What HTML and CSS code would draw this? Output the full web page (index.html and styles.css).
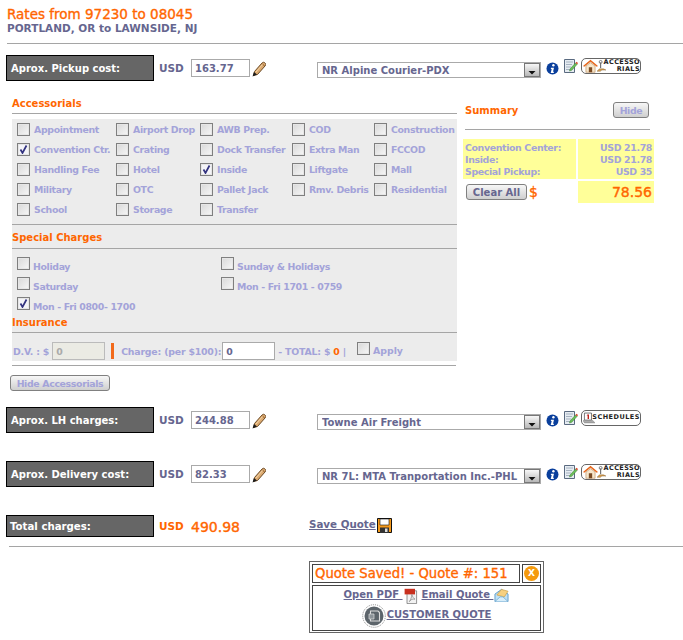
FILE: index.html
```html
<!DOCTYPE html>
<html lang="en">
<head>
<meta charset="utf-8">
<title>Rates</title>
<link rel="stylesheet" href="styles.css">
</head>
<body>
<svg class="defs" width="0" height="0" aria-hidden="true">
  <symbol id="pencil" viewBox="0 0 14 16">
    <path d="M1.500 14.500l1-4 7.500-8.500c1-1 2-1 3 0s1 2 0 3l-7.500 8.500z" fill="#dcaa70" stroke="#6b4a25" stroke-width="1"/>
    <path d="M10 2.500l2.500 2.500" stroke="#8a5a28" fill="none"/>
    <path d="M4 11l6.500-7.500" stroke="#f3d4a8" fill="none"/>
    <path d="M0.500 15.500l1.500-4.500 3 2.500z" fill="#1c1c1c"/>
  </symbol>
  <symbol id="info" viewBox="0 0 13 13">
    <circle cx="6.500" cy="6.500" r="6" fill="#0a3f9c"/>
    <circle cx="7.400" cy="3.300" r="1.200" fill="#fff"/>
    <path d="M5 5.800h3l-1 4h1l-.3 1.200h-3l1-4H4.800z" fill="#fff"/>
  </symbol>
  <symbol id="note" viewBox="0 0 16 16">
    <path d="M1.500 1.500h10v13h-10z" fill="#e6ecf2" stroke="#5a6a80"/>
    <path d="M3 4h7M3 6.500h6M3 9h5M3 11.500h4" stroke="#a6b2c0"/>
    <path d="M7 11l5.500-6 1.700 1.300-5.500 6-2.200.7z" fill="#6cc05a" stroke="#3a7a30" stroke-width=".5"/>
    <path d="M12.500 5l1-1.200 1.500 1.200-.8 1.300z" fill="#d8442a"/>
  </symbol>
  <symbol id="floppy" viewBox="0 0 15 15">
    <path d="M.5.500h14v14H.5z" fill="#f59a1c" stroke="#111"/>
    <path d="M3 1h9v6H3z" fill="#fff" stroke="#111" stroke-width=".6"/>
    <path d="M3 9.500h9V15H3z" fill="#333"/>
    <path d="M8 10.500h2.500V14H8z" fill="#ddd"/>
  </symbol>
  <symbol id="pdf" viewBox="0 0 16 20">
    <path d="M3 3.500h12v16H3z" fill="#f2f2f2" stroke="#777"/>
    <path d="M0 1h13v7H0z" fill="#c8301f"/>
    <path d="M6 17c2-3 3-6 3-9 1 3 2 5 4 6-3-.5-5 0-7 3z" fill="none" stroke="#888" stroke-width=".9"/>
  </symbol>
  <symbol id="mail" viewBox="0 0 16 15">
    <path d="M1 6.500l7-5 7 5v8H1z" fill="#bfe0f5" stroke="#5c9cc8"/>
    <path d="M3 7.500l5-6 7 2-4 6z" fill="#f7d080" stroke="#c99a3a" stroke-width=".7"/>
    <path d="M1 14.500l5.500-5h3l5.500 5" fill="#d8eefa" stroke="#5c9cc8" stroke-width=".7"/>
  </symbol>
  <symbol id="cust" viewBox="0 0 24 24">
    <circle cx="12" cy="12" r="11.300" fill="#fff" stroke="#888" stroke-dasharray="1 1"/>
    <circle cx="12" cy="12" r="9.500" fill="#5c646a"/>
    <path d="M8.500 7h7.500l1.500 1.500V17H8.500z" fill="none" stroke="#ddd" stroke-width="1.100"/>
    <path d="M7 10h5v5H7z" fill="#8b9297" stroke="#ddd" stroke-width=".7"/>
  </symbol>
  <symbol id="house" viewBox="0 0 18 15">
    <path d="M0 7.500L9 0l9 7.500-1.500 1L9 2.500 1.500 8.500z" fill="#e8661a"/>
    <path d="M3.500 7.500L9 3.500l5.500 4V15h-11z" fill="#f6e6cc" stroke="#a9733a" stroke-width=".6"/>
    <path d="M7 9h4v6H7z" fill="#7a4a22"/>
  </symbol>
  <symbol id="hand" viewBox="0 0 16 15">
    <path d="M4.500 3v7" stroke="#555" stroke-width="1.200"/>
    <circle cx="4.500" cy="2.500" r="1.800" fill="none" stroke="#666"/>
    <path d="M0 14l3-3h5l3 1.500H6l-2 1.500z" fill="#d9a254" stroke="#7a5520" stroke-width=".5"/>
  </symbol>
  <symbol id="sched" viewBox="0 0 17 15">
    <path d="M2 .500h10v10H2z" fill="#fff" stroke="#444"/>
    <path d="M6.500 2.500h2V9h-2zM5 3.500l1.500-1V4z" fill="#c0201a"/>
    <path d="M0 11h14l3 3.500H2z" fill="#aaa" stroke="#666" stroke-width=".5"/>
  </symbol>
</svg>

<main class="page">
  <header class="head">
    <h1 class="title">Rates from 97230 to 08045</h1>
    <p class="route">PORTLAND, OR to LAWNSIDE, NJ</p>
  </header>
  <hr class="rule rule-top">

  <section class="cost-row cost-first">
    <div class="cost-label">Aprox. Pickup cost:</div>
    <span class="cur">USD</span>
    <input class="amount" type="text" value="163.77">
    <svg class="ic-pencil"><use href="#pencil"/></svg>
    <select class="carrier"><option>NR Alpine Courier-PDX</option></select>
    <svg class="ic-info"><use href="#info"/></svg>
    <svg class="ic-note"><use href="#note"/></svg>
    <a class="pill"><svg class="pill-house"><use href="#house"/></svg><svg class="pill-hand"><use href="#hand"/></svg><span class="pill-text">ACCESSO<br>RIALS</span></a>
  </section>

  <div class="middle">
    <section class="acc">
      <h2 class="sec acc-head">Accessorials</h2>
      <hr class="rule">
      <div class="panel">
        <div class="acc-grid">
          <label class="opt"><input type="checkbox">Appointment</label>
          <label class="opt"><input type="checkbox">Airport Drop</label>
          <label class="opt"><input type="checkbox">AWB Prep.</label>
          <label class="opt"><input type="checkbox">COD</label>
          <label class="opt"><input type="checkbox">Construction</label>
          <label class="opt"><input type="checkbox" checked>Convention Ctr.</label>
          <label class="opt"><input type="checkbox">Crating</label>
          <label class="opt"><input type="checkbox">Dock Transfer</label>
          <label class="opt"><input type="checkbox">Extra Man</label>
          <label class="opt"><input type="checkbox">FCCOD</label>
          <label class="opt"><input type="checkbox">Handling Fee</label>
          <label class="opt"><input type="checkbox">Hotel</label>
          <label class="opt"><input type="checkbox" checked>Inside</label>
          <label class="opt"><input type="checkbox">Liftgate</label>
          <label class="opt"><input type="checkbox">Mall</label>
          <label class="opt"><input type="checkbox">Military</label>
          <label class="opt"><input type="checkbox">OTC</label>
          <label class="opt"><input type="checkbox">Pallet Jack</label>
          <label class="opt"><input type="checkbox">Rmv. Debris</label>
          <label class="opt"><input type="checkbox">Residential</label>
          <label class="opt"><input type="checkbox">School</label>
          <label class="opt"><input type="checkbox">Storage</label>
          <label class="opt"><input type="checkbox">Transfer</label>
        </div>
        <hr class="rule">
        <h2 class="sec sec-special">Special Charges</h2>
        <hr class="rule">
        <div class="spc-grid">
          <label class="opt opt-raised"><input type="checkbox">Holiday</label>
          <label class="opt opt-raised"><input type="checkbox">Sunday &amp; Holidays</label>
          <label class="opt opt-raised"><input type="checkbox">Saturday</label>
          <label class="opt opt-raised"><input type="checkbox">Mon - Fri 1701 - 0759</label>
          <label class="opt opt-raised"><input type="checkbox" checked>Mon - Fri 0800- 1700</label>
        </div>
        <h2 class="sec sec-ins">Insurance</h2>
        <hr class="rule">
        <div class="ins">
          <span>D.V. : $</span>
          <input class="dv" type="text" value="0" disabled>
          <span class="bar"></span>
          <span>Charge: (per $100):</span>
          <input class="charge" type="text" value="0">
          <span>- TOTAL: $ <b class="orange">0</b> |</span>
          <label class="opt opt-raised opt-apply"><input type="checkbox">Apply</label>
        </div>
      </div>
      <hr class="rule rule-under">
      <button class="btn btn-hide-acc" type="button">Hide Accessorials</button>
    </section>

    <aside class="summary">
      <div class="sum-head">
        <h2 class="sec sum-title">Summary</h2>
        <button class="btn btn-hide" type="button">Hide</button>
      </div>
      <hr class="rule rule-sum">
      <div class="sum-table">
        <div class="yellow sum-names">Convention Center:<br>Inside:<br>Special Pickup:</div>
        <div class="yellow sum-vals">USD 21.78<br>USD 21.78<br>USD 35</div>
      </div>
      <div class="sum-total">
        <div class="sum-clear"><button class="btn btn-clear" type="button">Clear All</button><span class="dollar">$</span></div>
        <div class="yellow sum-amount">78.56</div>
      </div>
    </aside>
  </div>

  <section class="cost-row cost-lh">
    <div class="cost-label">Aprox. LH charges:</div>
    <span class="cur">USD</span>
    <input class="amount" type="text" value="244.88">
    <svg class="ic-pencil"><use href="#pencil"/></svg>
    <select class="carrier"><option>Towne Air Freight</option></select>
    <svg class="ic-info"><use href="#info"/></svg>
    <svg class="ic-note"><use href="#note"/></svg>
    <a class="pill"><svg class="pill-sched"><use href="#sched"/></svg><span class="pill-text pill-one">SCHEDULES</span></a>
  </section>

  <section class="cost-row cost-del">
    <div class="cost-label">Aprox. Delivery cost:</div>
    <span class="cur">USD</span>
    <input class="amount" type="text" value="82.33">
    <svg class="ic-pencil"><use href="#pencil"/></svg>
    <select class="carrier"><option>NR 7L: MTA Tranportation Inc.-PHL</option></select>
    <svg class="ic-info"><use href="#info"/></svg>
    <svg class="ic-note"><use href="#note"/></svg>
    <a class="pill"><svg class="pill-house"><use href="#house"/></svg><svg class="pill-hand"><use href="#hand"/></svg><span class="pill-text">ACCESSO<br>RIALS</span></a>
  </section>

  <section class="total-row">
    <div class="cost-label cost-label-total">Total charges:</div>
    <span class="cur orange">USD</span>
    <span class="grand">490.98</span>
    <a class="link save">Save Quote</a>
    <svg class="ic-floppy"><use href="#floppy"/></svg>
  </section>
  <hr class="rule rule-bottom">

  <section class="saved">
    <div class="saved-top">
      <div class="saved-title">Quote Saved! - Quote #: 151</div>
      <div class="saved-x"><span class="x">X</span></div>
    </div>
    <div class="saved-links">
      <div class="saved-line">
        <a class="link">Open PDF </a><svg class="ic-pdf"><use href="#pdf"/></svg>
        <a class="link">Email Quote </a><svg class="ic-mail"><use href="#mail"/></svg>
      </div>
      <div class="saved-line saved-line2">
        <svg class="ic-cust"><use href="#cust"/></svg><a class="link">CUSTOMER QUOTE</a>
      </div>
    </div>
  </section>
</main>
</body>
</html>
```
FILE: styles.css
```css
* { box-sizing: border-box; }
html, body { margin: 0; padding: 0; background: #fff; }
body { font: bold 10px "DejaVu Sans", Verdana, sans-serif; color: #66668f; }
.defs { position: absolute; }
.page { width: 683px; height: 640px; overflow: hidden; }

.head { padding: 7px 0 0 7px; height: 43px; }
.title { margin: 0; font-size: 13.500px; font-weight: normal; -webkit-text-stroke: .35px #ff6600; line-height: 15px; color: #ff6600; }
.route { margin: 0; font-size: 10.500px; line-height: 12px; color: #66668f; }

.rule { border: 0; height: 1px; margin: 0; background: #a5a5a5; }
.rule-top { margin-left: 7px; }
.rule-under { margin-top: 4px; width: 444px; }
.rule-sum { margin-top: 11px; width: 185px; margin-left: 2px; }
.rule-bottom { margin: 9px 0 0 9px; }

.cost-row { display: flex; align-items: flex-start; height: 26px; margin-left: 6px; }
.cost-first { margin-top: 11px; }
.cost-lh { margin-top: 16px; }
.cost-del { margin-top: 28px; }
.cost-label { width: 148px; height: 26px; flex: none; padding-left: 4px; background: #666; border: 1px solid #000; color: #fff; font-size: 10px; line-height: 26px; }
.cur { margin: 7px 0 0 5px; width: 32px; line-height: 13px; font-size: 10.500px; }
.amount { width: 59px; height: 18px; margin-top: 4px; padding: 0 0 0 3px; border: 1px solid #aaa; background: #fff; font: bold 10px "DejaVu Sans", sans-serif; color: #66668f; }
.ic-pencil { width: 14px; height: 16px; margin: 6px 0 0 2px; flex: none; }
.carrier { width: 224px; height: 16px; margin: 7px 0 0 51px; padding: 0 18px 0 4px; border: 1px solid #aaa; border-radius: 0; appearance: none; font: bold 10px "DejaVu Sans", sans-serif; color: #66668f;
  background: #fff url("data:image/svg+xml,%3Csvg xmlns='http://www.w3.org/2000/svg' width='16' height='14'%3E%3Cdefs%3E%3ClinearGradient id='g' x1='0' y1='0' x2='0' y2='1'%3E%3Cstop offset='0' stop-color='%23fafafa'/%3E%3Cstop offset='1' stop-color='%23b5b5b5'/%3E%3C/linearGradient%3E%3C/defs%3E%3Crect x='.5' y='.5' width='15' height='13' fill='url(%23g)' stroke='%23777'/%3E%3Cpath d='M4.500 8h7L8 11.500z' fill='%23111'/%3E%3C/svg%3E") no-repeat right 0 top 0; }
.ic-info { width: 13px; height: 13px; margin: 7px 0 0 5px; flex: none; }
.ic-note { width: 16px; height: 16px; margin: 3px 0 0 4px; flex: none; }
.pill { position: relative; display: block; width: 60px; height: 16px; margin: 3px 0 0 2px; border: 1px solid #666; border-radius: 5px; background: #fff; color: #222; overflow: hidden; flex: none; }
.pill-house { position: absolute; left: 1px; top: 0; width: 15px; height: 14px; }
.pill-hand { position: absolute; left: 15px; top: 0; width: 13px; height: 14px; }
.pill-sched { position: absolute; left: 1px; top: 0; width: 12px; height: 14px; }
.pill-text { position: absolute; right: 0; top: 0; font: bold 6.500px/7px "DejaVu Sans", sans-serif; text-align: right; letter-spacing: .4px; }
.pill-one { top: 3px; letter-spacing: .5px; }

.middle { display: flex; align-items: flex-start; height: 310px; padding-left: 12px; }
.acc { width: 445px; flex: none; }
.sec { margin: 0; font-size: 10px; line-height: 12px; color: #ff6600; }
.acc-head { margin-top: 17px; height: 15px; }
.panel { margin-top: 5px; height: 242px; background: #ececec; }
.acc-grid { display: grid; grid-template-columns: 99px 84px 92px 82px 83px; grid-auto-rows: 20px; padding-left: 5px; height: 105px; }
.opt { display: flex; align-items: center; gap: 4px; font-size: 9.400px; letter-spacing: -.35px; color: #a3a3d9; white-space: nowrap; }
.opt input { flex: none; width: 13px; height: 13px; margin: 0; appearance: none; border: 1px solid #7f7f7f; background: linear-gradient(135deg, #d8d8d8, #f7f7f7); box-shadow: inset 0 0 0 1px #e6e6e6; }
.opt input:checked { background: #f4f4f8 url("data:image/svg+xml,%3Csvg xmlns='http://www.w3.org/2000/svg' width='11' height='11'%3E%3Cpath d='M2.500 5.500l2 3.500L8.500 1.500' fill='none' stroke='%2333337f' stroke-width='1.700'/%3E%3C/svg%3E") no-repeat center; }
.sec-special { padding-top: 7px; height: 23px; }
.spc-grid { display: grid; grid-template-columns: 204px 1fr; grid-auto-rows: 20px; padding-left: 5px; height: 62px; margin-top: 5px; }
.opt-raised { align-items: flex-start; gap: 3px; line-height: 14px; padding-top: 6px; }
.opt-raised input { margin-top: -3px; }
.sec-ins { height: 16px; padding-top: 1px; }
.ins { display: flex; align-items: center; height: 28px; padding: 8px 0 0 1px; font-size: 9.400px; letter-spacing: -.2px; color: #a3a3d9; white-space: nowrap; }
.orange { color: #ff6600; }
.dv { width: 53px; height: 18px; margin-left: 3px; padding: 0 0 0 3px; border: 1px solid #bbb; background: #ebebe4; font: bold 9.400px "DejaVu Sans", sans-serif; color: #aaa; }
.bar { width: 3px; height: 16px; margin: 0 7px 0 6px; background: #f26a1b; }
.charge { width: 53px; height: 18px; margin: 0 3px 0 1px; padding: 0 0 0 3px; border: 1px solid #aaa; background: #fff; font: bold 9.400px "DejaVu Sans", sans-serif; color: #66668f; }
.opt-apply { padding-top: 0; margin-left: 11px; letter-spacing: 0; }
.opt-apply input { margin-top: -2px; }
.btn { display: block; margin: 0; padding: 0; border: 1px solid #808080; border-radius: 3px; background: linear-gradient(#f7f7f7, #cfcfcf); font: bold 9.400px "DejaVu Sans", sans-serif; letter-spacing: -.35px; color: #a3a3d9; white-space: nowrap; }
.btn-hide-acc { width: 100px; height: 16px; margin: 9px 0 0 -2px; }

.summary { width: 191px; margin-left: 6px; padding-top: 21px; }
.sum-head { display: flex; justify-content: space-between; align-items: center; height: 16px; padding: 0 5px 0 2px; }
.sum-title { padding-top: 2px; }
.btn-hide { width: 36px; height: 16px; }
.sum-table { display: flex; gap: 2px; margin-top: 9px; }
.yellow { background: #ffff99; font-size: 9.400px; letter-spacing: -.35px; color: #a3a3d9; }
.sum-names { width: 113px; height: 40px; padding: 3px 0 0 2px; line-height: 12px; }
.sum-vals { width: 76px; height: 40px; padding: 3px 2px 0 0; line-height: 12px; text-align: right; }
.sum-total { display: flex; align-items: flex-start; margin-top: 2px; gap: 2px; }
.sum-clear { display: flex; width: 113px; padding: 3px 0 0 3px; gap: 2px; align-items: center; }
.btn-clear { width: 61px; height: 16px; font-size: 10px; letter-spacing: 0; color: #66668f; }
.dollar { color: #ff6600; font-size: 14px; font-weight: normal; -webkit-text-stroke: .35px #ff6600; line-height: 14px; }
.sum-amount { width: 76px; height: 22px; padding-right: 2px; text-align: right; font-size: 14px; letter-spacing: 0; font-weight: normal; -webkit-text-stroke: .4px #ff6600; line-height: 22px; color: #ff6600; }

.total-row { display: flex; align-items: flex-start; height: 22px; margin: 28px 0 0 6px; }
.cost-label-total { height: 22px; font-size: 10.200px; line-height: 22px; padding-left: 3px; }
.total-row .cur { margin-top: 5px; }
.grand { width: 118px; font-size: 14px; font-weight: normal; -webkit-text-stroke: .4px #ff6600; line-height: 22px; color: #ff6600; margin-top: 1px; }
.link { color: #66668f; text-decoration: underline; font-size: 10px; white-space: pre; }
.save { margin-top: 3px; font-size: 10.300px; }
.ic-floppy { width: 15px; height: 15px; margin: 3px 0 0 1px; }

.saved { width: 235px; height: 72px; margin: 14px 0 0 309px; padding: 2px; border: 1px solid #666; }
.saved-top { display: flex; gap: 2px; height: 19px; }
.saved-title { width: 208px; height: 19px; border: 1px solid #444; padding-left: 2px; font-size: 13.200px; font-weight: normal; -webkit-text-stroke: .35px #ff6600; line-height: 17px; color: #ff6600; white-space: nowrap; }
.saved-x { flex: 1; height: 19px; border: 1px solid #444; display: flex; align-items: center; justify-content: center; }
.x { width: 15px; height: 15px; border-radius: 50%; background: #f59a0c; color: #fff; font-size: 9px; line-height: 15px; text-align: center; }
.saved-links { height: 46px; margin-top: 2px; border: 1px solid #444; display: flex; flex-direction: column; align-items: center; }
.saved-line { display: flex; align-items: flex-start; height: 18px; padding-top: 3px; }
.saved-line2 { height: 24px; padding-top: 0; }
.saved-line2 .link { margin: 5px 0 0 1px; }
.ic-pdf { width: 14px; height: 16px; margin: -1px 4px 0 1px; }
.ic-mail { width: 15px; height: 14px; margin: -1px 0 0 1px; }
.ic-cust { width: 24px; height: 24px; }
```
